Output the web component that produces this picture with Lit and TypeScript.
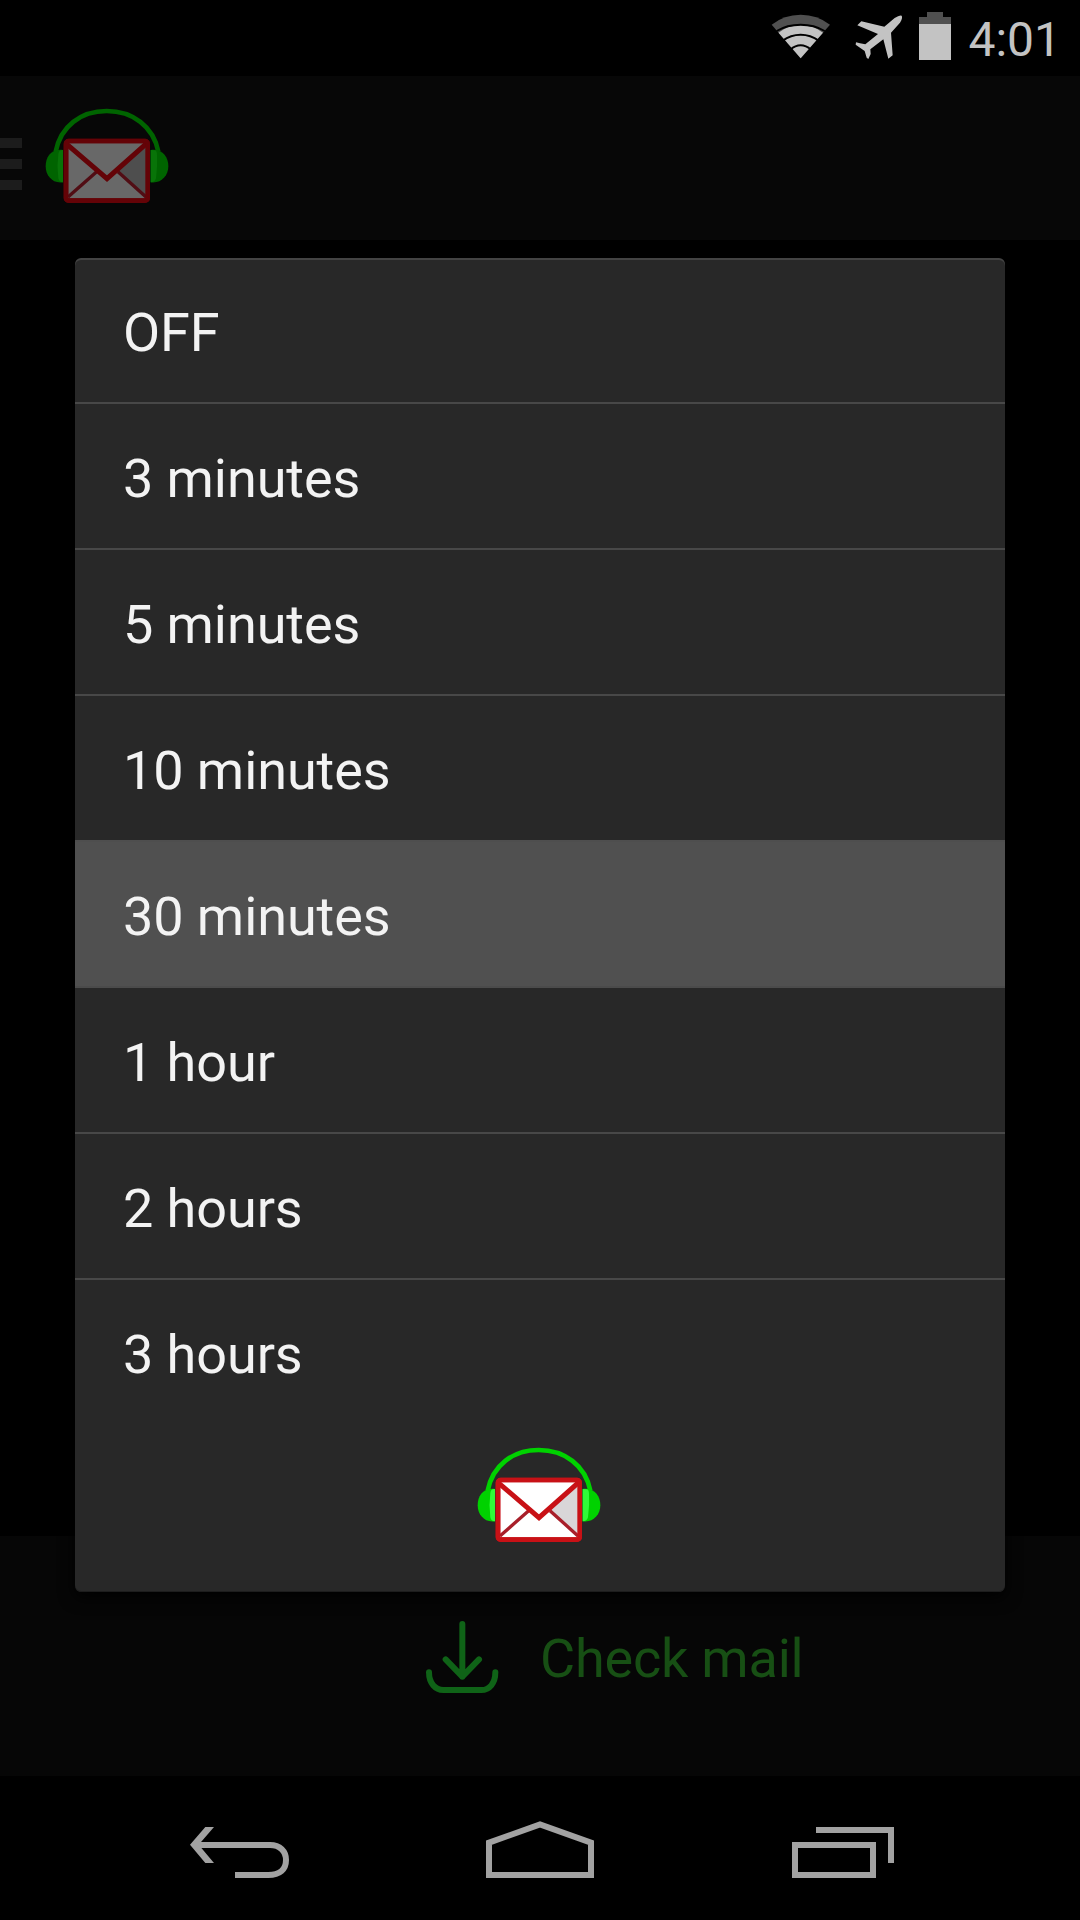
import { LitElement, html, css } from "lit";
import { customElement, property, state } from "lit/decorators.js";
import { classMap } from "lit/directives/class-map.js";

@customElement("mail-logo")
export class MailLogo extends LitElement {
  static styles = css`
    :host {
      display: block;
      width: 126px;
      height: 98px;
      --green: #00d200;
      --green-light: #30fb38;
      --red: #c81116;
      --red-dark: #a81f2a;
      --paper: #ffffff;
      --paper-shade: #d9d6d8;
    }
    :host([dimmed]) {
      --green: #006400;
      --green-light: #087408;
      --red: #640307;
      --red-dark: #510d14;
      --paper: #686868;
      --paper-shade: #4e4e4e;
    }
    svg {
      display: block;
    }
    .band {
      fill: none;
      stroke: var(--green);
      stroke-width: 14;
    }
    .ear {
      fill: var(--green);
    }
    .pad {
      fill: var(--green-light);
    }
    .paper {
      fill: var(--paper);
      stroke: var(--red);
      stroke-width: 14;
    }
    .shade {
      fill: var(--paper-shade);
    }
    .fold {
      fill: none;
      stroke: var(--red-dark);
      stroke-width: 10;
    }
    .flap {
      fill: none;
      stroke: var(--red);
      stroke-width: 15;
    }
    .edge {
      fill: none;
      stroke: var(--red);
      stroke-width: 14;
    }
  `;

  @property({ type: Boolean, reflect: true }) dimmed = false;

  render() {
    return html`<svg width="126" height="98" viewBox="48 48 378 294">
      <path class="band" d="M83 182 C98 106 158 60 236 60 C314 60 376 106 391 182" />
      <path class="ear" d="M105 177 C70 172 53 198 53 226 C53 254 74 279 105 274 Z" />
      <path class="ear" d="M368 177 C403 172 421 198 421 226 C421 254 399 279 368 274 Z" />
      <path class="pad" d="M105 177 Q92 176 91 190 Q86 226 91 262 Q94 275 105 274 Z" />
      <path class="pad" d="M368 177 L381 178 Q387 180 387 192 Q389 226 384 262 Q381 274 368 274 Z" />
      <rect class="paper" x="114" y="150" width="245" height="179" rx="8" />
      <path class="shade" d="M356 158 L270 240 L356 316 Z" />
      <path class="fold" d="M206 242 L120 318 M270 242 L354 318" />
      <path class="flap" d="M117 160 L237 263 L356 157" />
      <rect class="edge" x="114" y="150" width="245" height="179" rx="8" />
    </svg>`;
  }
}

@customElement("status-bar")
export class StatusBar extends LitElement {
  static styles = css`
    :host {
      display: flex;
      justify-content: flex-end;
      align-items: flex-start;
      height: 76px;
      padding: 12px 19px 0 0;
      box-sizing: border-box;
      color: #c3c3c3;
    }
    svg {
      display: block;
    }
    .plane {
      margin-left: 24px;
    }
    .battery {
      margin-left: 16px;
    }
    .time {
      margin-left: 17px;
      font: 400 48px/56px Roboto, sans-serif;
    }
    .lit {
      fill: #c3c3c3;
    }
    .faded {
      fill: #505050;
    }
    .gap {
      fill: none;
      stroke: #000;
      stroke-width: 6;
    }
  `;

  render() {
    return html`
      <svg width="60" height="48" viewBox="63 36 180 144">
        <path class="faded" d="M152 175 L65 74 Q102 44 152 44 Q202 44 240 74 Z" />
        <path class="lit" d="M152 175 L85.500 98 Q113 76 152 76 Q191 76 219 98 Z" />
        <path class="gap" d="M80 93 Q111 74 152 74 Q193 74 224 93" />
        <path class="gap" d="M98 122 Q122 104.500 152 104.500 Q182 104.500 206 122" />
        <path class="gap" d="M121 149 Q136 136 152 136 Q168 136 183 149" />
      </svg>
      <svg class="plane" width="48" height="48" viewBox="315 36 144 144">
        <path
          class="lit"
          d="M434 54 Q449 44 455 47 Q459 53 450 68 L423 98 L428 166 L415 176 L400 118 L361 148 L362 162 L355 177 L350 173 L344 153 L317 134 L318 127 L330 130 L346 133 L384 102 L322 76 L334 64 L403 80 Z"
        />
      </svg>
      <svg class="battery" width="32" height="48" viewBox="507 36 96 144">
        <path class="faded" d="M507 51 H531 V36 H579 V51 H603 V72 H507 Z" />
        <path class="lit" d="M507 72 H603 V180 H507 Z" />
      </svg>
      <span class="time">4:01</span>
    `;
  }
}

@customElement("nav-bar")
export class NavBar extends LitElement {
  static styles = css`
    :host {
      display: flex;
      align-items: flex-end;
      justify-content: space-between;
      height: 144px;
      padding: 0 186px 42px 190px;
      box-sizing: border-box;
      background: #000;
    }
    svg {
      display: block;
      fill: none;
      stroke: #a2a2a2;
      stroke-width: 18;
    }
    .home {
      margin-right: 2px;
    }
    .solid {
      fill: #a2a2a2;
      stroke: none;
    }
  `;

  render() {
    return html`
      <svg width="100" height="58" viewBox="90 90 300 174">
        <path d="M112 165 H330 C360 165 378 184 378 210 C378 238 360 255 325 255 H225" />
        <path class="solid" d="M90 164 L136 111 H162 L116 164 L162 219 H136 Z" />
      </svg>
      <svg class="home" width="108" height="58" viewBox="978 90 324 174">
        <path d="M987 255 V158 L1140 103 L1293 158 V255 Z" />
      </svg>
      <svg width="102" height="58" viewBox="96 90 306 174">
        <path d="M105 165 H339 V255 H105 Z M168 120 H393 V219" />
      </svg>
    `;
  }
}

@customElement("app-root")
export class AppRoot extends LitElement {
  static styles = css`
    :host {
      display: flex;
      flex-direction: column;
      position: relative;
      width: 1080px;
      height: 1920px;
      overflow: hidden;
      background: #000;
      font-family: Roboto, sans-serif;
    }
    .app-bar {
      display: flex;
      align-items: flex-start;
      height: 164px;
      background: #070707;
    }
    .drawer {
      display: flex;
      flex-direction: column;
      gap: 11px;
      width: 44px;
      padding-top: 62px;
    }
    .drawer-line {
      width: 22px;
      height: 10px;
      background: #1c1c1c;
    }
    .app-bar mail-logo {
      margin-top: 31px;
    }
    .content {
      flex: 1;
    }
    .check {
      display: flex;
      align-items: flex-start;
      height: 240px;
      padding: 84px 0 0 425px;
      box-sizing: border-box;
      background: #060606;
      color: #174f14;
      font-size: 54px;
      line-height: 78px;
      letter-spacing: -0.2px;
    }
    .check svg {
      display: block;
      margin-right: 41px;
      fill: none;
      stroke: #0f6317;
      stroke-width: 18;
      stroke-linecap: round;
      stroke-linejoin: round;
    }
    .dialog {
      position: absolute;
      left: 75px;
      top: 258px;
      width: 930px;
      height: 1334px;
      display: flex;
      flex-direction: column;
      border-radius: 6px;
      overflow: hidden;
      background: #282828;
      box-shadow: 0 5px 16px #000;
    }
    .dialog::after {
      content: "";
      position: absolute;
      inset: 0;
      border-radius: 6px;
      box-shadow: inset 0 2px 0 #434343, inset 0 -1px 0 #1d1d1d;
      pointer-events: none;
    }
    .option {
      height: 146px;
      padding: 2px 0 0 48px;
      box-sizing: border-box;
      border-bottom: 2px solid #484848;
      color: #f3f3f3;
      font-size: 54px;
      line-height: 146px;
      letter-spacing: -0.08px;
      cursor: pointer;
    }
    .option:last-of-type {
      border-bottom-color: transparent;
    }
    .before-selected {
      border-bottom-color: #4e4e4e;
    }
    .selected {
      background: #505050;
      border-bottom-color: #4b4b4b;
    }
    .footer {
      display: flex;
      justify-content: center;
      padding: 20px 2px 0 0;
    }
  `;

  @state() private selected = 4;

  private options = [
    "OFF",
    "3 minutes",
    "5 minutes",
    "10 minutes",
    "30 minutes",
    "1 hour",
    "2 hours",
    "3 hours",
  ];

  render() {
    return html`
      <status-bar></status-bar>
      <header class="app-bar">
        <div class="drawer">
          <div class="drawer-line"></div>
          <div class="drawer-line"></div>
          <div class="drawer-line"></div>
        </div>
        <mail-logo dimmed></mail-logo>
      </header>
      <main class="content"></main>
      <section class="check">
        <svg width="74" height="76" viewBox="75 90 222 228">
          <path d="M187 102 V260 M137 208 L187 260 L237 208" />
          <path d="M87 247 C87 280 106 300 130 300 H244 C268 300 286 280 286 247" />
        </svg>
        <span>Check mail</span>
      </section>
      <nav-bar></nav-bar>
      <section class="dialog">
        ${this.options.map(
          (label, i) => html`<div
            class=${classMap({
              option: true,
              selected: i === this.selected,
              "before-selected": i === this.selected - 1,
            })}
            @click=${() => (this.selected = i)}
          >
            ${label}
          </div>`
        )}
        <footer class="footer"><mail-logo></mail-logo></footer>
      </section>
    `;
  }
}
